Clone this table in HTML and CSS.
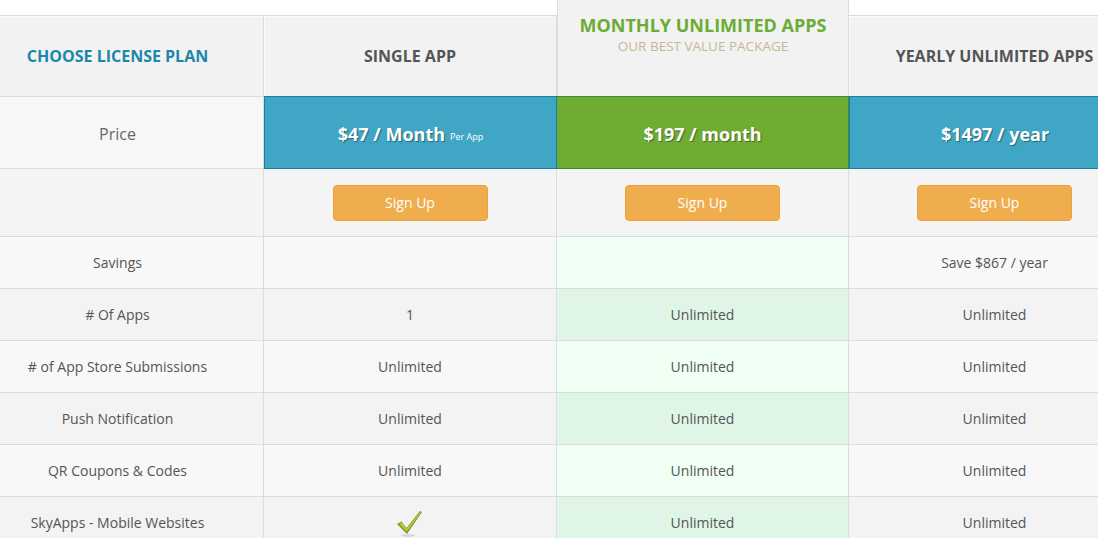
FILE: index.html
```html
<!DOCTYPE html>
<html>
<head>
<meta charset="utf-8">
<link rel="stylesheet" href="styles.css">
</head>
<body>
<div class="plans">
  <div class="cell head first"><span class="title-blue">CHOOSE LICENSE PLAN</span></div>
  <div class="cell head"><span class="title">SINGLE APP</span></div>
  <div class="cell head featured">
    <span class="title-green">MONTHLY UNLIMITED APPS</span>
    <span class="sub">OUR BEST VALUE PACKAGE</span>
  </div>
  <div class="cell head"><span class="title">YEARLY UNLIMITED APPS</span></div>

  <div class="cell price-label">Price</div>
  <div class="cell price blue">$47 / Month <small>Per App</small></div>
  <div class="cell price green">$197 / month</div>
  <div class="cell price blue">$1497 / year</div>

  <div class="cell signup"></div>
  <div class="cell signup"><button class="btn">Sign Up</button></div>
  <div class="cell signup"><button class="btn">Sign Up</button></div>
  <div class="cell signup"><button class="btn">Sign Up</button></div>

  <div class="cell row light">Savings</div>
  <div class="cell row light"></div>
  <div class="cell row light mint"></div>
  <div class="cell row light">Save $867 / year</div>

  <div class="cell row dark"># Of Apps</div>
  <div class="cell row dark">1</div>
  <div class="cell row dark mint2">Unlimited</div>
  <div class="cell row dark">Unlimited</div>

  <div class="cell row light"># of App Store Submissions</div>
  <div class="cell row light">Unlimited</div>
  <div class="cell row light mint">Unlimited</div>
  <div class="cell row light">Unlimited</div>

  <div class="cell row dark">Push Notification</div>
  <div class="cell row dark">Unlimited</div>
  <div class="cell row dark mint2">Unlimited</div>
  <div class="cell row dark">Unlimited</div>

  <div class="cell row light">QR Coupons &amp; Codes</div>
  <div class="cell row light">Unlimited</div>
  <div class="cell row light mint">Unlimited</div>
  <div class="cell row light">Unlimited</div>

  <div class="cell row dark">SkyApps - Mobile Websites</div>
  <div class="cell row dark check-cell">
    <svg class="check" width="30" height="30" viewBox="0 0 30 30">
      <ellipse cx="13" cy="27.5" rx="7" ry="1.5" fill="#d6d6d6"/>
      <path d="M2 16 L6.5 13.5 L11.5 20 L25 3 L27 4 L12 26 Z" fill="#6aa52a"/>
      <path d="M4.5 16 L6.8 14.8 L11.4 21.2 L25.2 4.2 L25.8 4.5 L11.8 23.5 Z" fill="#e8cc3c" opacity="0.85"/>
    </svg>
  </div>
  <div class="cell row dark mint2">Unlimited</div>
  <div class="cell row dark">Unlimited</div>
</div>
</body>
</html>
```

FILE: styles.css
```css
html, body {
  margin: 0;
  padding: 0;
  background: #fff;
  overflow: hidden;
}

body {
  font-family: "Open Sans", "Liberation Sans", sans-serif;
  color: #555;
  font-size: 14px;
  width: 1098px;
  height: 538px;
}

.plans {
  display: grid;
  grid-template-columns: 292px 293px 292px 292px;
  grid-template-rows: 97px 72px 68px repeat(6, 52px);
  margin-left: -28px;
  width: 1169px;
}

.cell {
  box-sizing: border-box;
  display: flex;
  align-items: center;
  justify-content: center;
  text-align: center;
  border-right: 1px solid #dcdcdc;
  border-bottom: 1px solid #dcdcdc;
}

.head {
  margin-top: 15px;
  border-top: 1px solid #dcdcdc;
  background: #f2f2f2;
  font-weight: 700;
  font-size: 16px;
  box-shadow: inset 1px 1px 0 #fafafa;
}

.head.featured {
  margin-top: 0;
  border-top: none;
  border-left: 1px solid #dcdcdc;
  flex-direction: column;
  justify-content: flex-start;
  padding-top: 13px;
  box-shadow: none;
}

.title-blue {
  color: #1b87ab;
}

.title {
  color: #555;
}

.title-green {
  color: #6aac34;
  font-size: 18px;
  line-height: 24px;
}

.sub {
  color: #c6b88f;
  font-weight: 400;
  font-size: 13.5px;
  line-height: 18px;
}

.price-label {
  background: #f7f7f7;
  font-size: 16px;
  color: #666;
  padding-top: 2px;
}

.price {
  color: #fff;
  font-weight: 700;
  font-size: 18px;
  text-shadow: 1px 1px 1px rgba(0, 0, 0, 0.4);
  border-bottom: none;
  margin-top: -1px;
  padding-top: 2px;
}

.price small {
  font-size: 9px;
  font-weight: 400;
  margin-left: 5px;
  margin-top: 6px;
  text-shadow: none;
}

.price.blue {
  background: #3fa6c5;
  border: 1px solid #1a7fa2;
}

.price.green {
  background: #6fad32;
  border: 1px solid #3a8d3b;
  border-left: none;
}

.signup {
  background: #f4f4f4;
}

.btn {
  width: 155px;
  height: 36px;
  background: #f0ad4e;
  border: 1px solid #eaa23a;
  border-radius: 4px;
  color: #fff;
  font-family: "Open Sans", "Liberation Sans", sans-serif;
  font-size: 14px;
  cursor: pointer;
  padding: 0;
}

.row {
  font-size: 14px;
  color: #555;
}

.light {
  background: #f8f8f8;
}

.dark {
  background: #f3f3f3;
}

.mint {
  background: #f0fff4;
}

.mint2 {
  background: #dff5e5;
}

.check-cell {
  padding-top: 0;
}

.check {
  display: block;
}
```
